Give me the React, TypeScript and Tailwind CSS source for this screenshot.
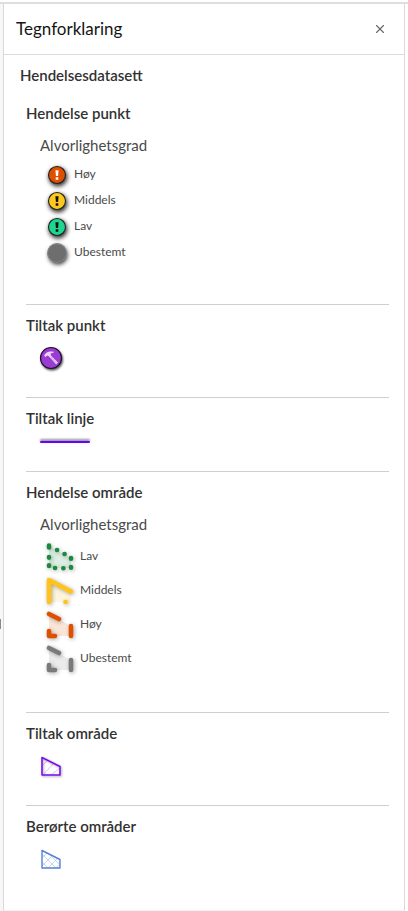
import React from 'react';
import { X } from 'lucide-react';

const pointLevels = [
  { label: 'Høy', fill: '#de4f00', mark: '#ffffff' },
  { label: 'Middels', fill: '#fcc81e', mark: '#111111' },
  { label: 'Lav', fill: '#1fd690', mark: '#111111' },
  { label: 'Ubestemt', fill: '#6e6e6e', mark: null },
];

const dashCorners = 'M9 7L19 12M31 19V29M15 29H9V24';

const areaLevels = [
  { label: 'Lav', color: '#1a8a3f', path: 'M9 6.5V8.5M17 11h.1M24.5 15h.1M31 19V19.8M31 28V28.8M23.3 29.3h.1M15 29h.1M9 26.2V27M9 18V18.6' },
  { label: 'Middels', color: '#ffc31a', path: 'M9 29V7L31 18.5M25.5 29h.1' },
  { label: 'Høy', color: '#de4f00', path: dashCorners },
  { label: 'Ubestemt', color: '#7a7a7a', path: dashCorners },
];

const PointSymbol = ({ fill, mark }: { fill: string; mark: string | null }) => (
  <svg width="34" height="26" viewBox="0 0 34 26" className="overflow-visible" aria-hidden="true">
    <circle cx="18" cy="16" r="9.5" fill="#000000" fillOpacity="0.8" className="blur-[2px]" />
    <circle cx="17" cy="14" r={mark ? 8.5 : 9.4} fill={fill} stroke={mark ? '#222222' : '#858585'} strokeWidth="1.1" />
    {mark && <path d="M15.4 9.2H18.6L18.1 15H15.9ZM15.7 16.3H18.3V18.8H15.7Z" fill={mark} />}
  </svg>
);

const AreaSymbol = ({ color, path }: { color: string; path: string }) => (
  <svg width="40" height="34" viewBox="0 0 40 34" className="overflow-visible" aria-hidden="true">
    <path d="M9 7L31 19V29H9Z" fill={color} fillOpacity="0.15" />
    <path d={path} fill="none" stroke={color} strokeWidth="4.6" strokeLinecap="round" strokeLinejoin="round" className="drop-shadow-[1px_1px_2px_rgba(0,0,0,0.35)]" />
  </svg>
);

const HammerSymbol = () => (
  <svg width="26" height="26" viewBox="0 0 26 26" className="overflow-visible" aria-hidden="true">
    <circle cx="12" cy="14.5" r="11" fill="#000000" fillOpacity="0.7" className="blur-[1px]" />
    <circle cx="11" cy="13" r="10.5" fill="#9a3bd2" stroke="#24112e" strokeWidth="1.2" />
    <path d="M4 10.4L5.6 8.4C7.6 6.7 10.2 6.2 13.6 6.8V7.8L10.6 8.6L11 10.4L18 17.6L16.2 19.4L9.2 11.8L7.6 10.4L5.4 12Z" fill="#ecd2fa" />
    <path d="M10.4 11.6L16.4 17.8M11.4 13.6L12.8 12.2M13.2 15.6L14.6 14.2" stroke="#c48ae6" strokeWidth="0.6" />
  </svg>
);

const LineSymbol = () => (
  <svg width="52" height="7" viewBox="0 0 52 7" className="overflow-visible" aria-hidden="true">
    <path d="M1 2.5H49" stroke="#000000" strokeOpacity="0.6" strokeWidth="2" strokeLinecap="round" className="blur-[1px]" />
    <path d="M1 4H49" stroke="#6a00ff" strokeWidth="2" strokeLinecap="round" />
  </svg>
);

const MeasureAreaSymbol = () => (
  <svg width="26" height="26" viewBox="0 0 26 26" className="overflow-visible" aria-hidden="true">
    <path d="M2 13L7 8M3 22L13 11M11 22L20 15" stroke="#dcc0f5" strokeWidth="1" />
    <path d="M2 4.5L20 13.5V22H2Z" fill="none" stroke="#7a0cf5" strokeWidth="1.6" strokeLinejoin="round" className="drop-shadow-[1px_1px_1px_rgba(0,0,0,0.35)]" />
  </svg>
);

const AffectedAreaSymbol = () => (
  <svg width="26" height="26" viewBox="0 0 26 26" aria-hidden="true">
    <path d="M2 12L7 7M2 20L13 9M8 22L18 12M16 22L20 18M2 8L16 22M9 8L20 19M2 16L8 22" stroke="#c6d5f5" strokeWidth="1" />
    <path d="M2 4.5L20 13.5V22H2Z" fill="none" stroke="#5680d8" strokeWidth="1.4" strokeLinejoin="round" />
  </svg>
);

const Section = ({ title, children }: { title: string; children: React.ReactNode }) => (
  <section className="border-t border-[#cfcfcf] pt-2.5 first:border-t-0">
    <h3 className="text-[15px] leading-5 font-semibold text-[#323232]">{title}</h3>
    <div className="pl-3.5">{children}</div>
  </section>
);

const App = () => {
  return (
    <div className="flex min-h-screen flex-col bg-white pt-0.5 font-['Lato',sans-serif]">
      <div className="flex grow border-t-2 border-[#dedede] pr-[3px]">
        <div className="relative w-[3px] bg-[#f7f7f7]">
          <span className="absolute top-[615px] left-0 h-2.5 w-px bg-[#8a8a8a]" />
        </div>
        <div className="grow border-x border-b border-x-[#d9d9d9] border-b-[#f3f3f3] bg-white">
          <header className="flex items-center justify-between border-b border-[#dcdcdc] py-3 pr-[17px] pl-3">
            <h1 className="text-[17px] leading-[26px] text-[#151515]">Tegnforklaring</h1>
            <button type="button" aria-label="Lukk" className="text-[#6a6a6a]">
              <X size={14} strokeWidth={2} />
            </button>
          </header>

          <main className="pt-2.5 pr-[15px] pl-[22px]">
            <h2 className="-ml-1.5 text-[15px] leading-5 font-semibold text-[#323232]">Hendelsesdatasett</h2>
            <div className="pt-2">
              <Section title="Hendelse punkt">
                <h4 className="mt-3 text-[15px] leading-5 text-[#4a4a4a]">Alvorlighetsgrad</h4>
                <ul className="mt-1.5 pb-[39px]">
                  {pointLevels.map((level) => (
                    <li key={level.label} className="flex h-[26px] items-center text-xs text-[#4a4a4a]">
                      <PointSymbol fill={level.fill} mark={level.mark} />
                      {level.label}
                    </li>
                  ))}
                </ul>
              </Section>

              <Section title="Tiltak punkt">
                <div className="pt-2.5 pb-[26px]">
                  <HammerSymbol />
                </div>
              </Section>

              <Section title="Tiltak linje">
                <div className="pt-2.5 pb-[26px]">
                  <LineSymbol />
                </div>
              </Section>

              <Section title="Hendelse område">
                <h4 className="mt-3 text-[15px] leading-5 text-[#4a4a4a]">Alvorlighetsgrad</h4>
                <ul className="mt-[5px] pb-[37px]">
                  {areaLevels.map((level) => (
                    <li key={level.label} className="flex h-[34px] items-center text-xs text-[#4a4a4a]">
                      <AreaSymbol color={level.color} path={level.path} />
                      {level.label}
                    </li>
                  ))}
                </ul>
              </Section>

              <Section title="Tiltak område">
                <div className="pt-2.5 pb-[26px]">
                  <MeasureAreaSymbol />
                </div>
              </Section>

              <Section title="Berørte områder">
                <div className="pt-2.5 pb-[26px]">
                  <AffectedAreaSymbol />
                </div>
              </Section>
            </div>
          </main>
        </div>
      </div>
    </div>
  );
};

export default App;
